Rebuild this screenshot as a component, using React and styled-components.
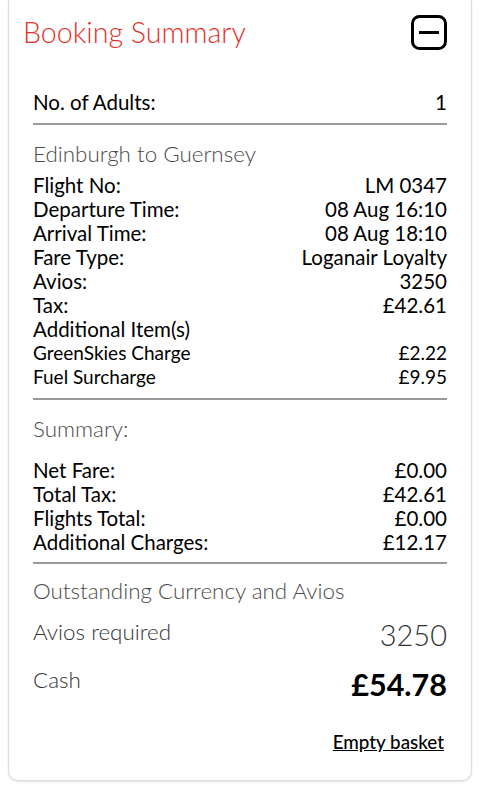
import React from 'react';
import styled, { createGlobalStyle } from 'styled-components';

const GlobalStyle = createGlobalStyle`
  body {
    margin: 0;
    background: #fff;
    font-family: Lato, "Open Sans", sans-serif;
    color: #111;
  }
`;

const flight = [
  { label: 'Flight No:', value: 'LM 0347' },
  { label: 'Departure Time:', value: '08 Aug 16:10' },
  { label: 'Arrival Time:', value: '08 Aug 18:10' },
  { label: 'Fare Type:', value: 'Loganair Loyalty' },
  { label: 'Avios:', value: '3250' },
  { label: 'Tax:', value: '£42.61' },
];

const extras = [
  { label: 'GreenSkies Charge', value: '£2.22' },
  { label: 'Fuel Surcharge', value: '£9.95' },
];

const summary = [
  { label: 'Net Fare:', value: '£0.00' },
  { label: 'Total Tax:', value: '£42.61' },
  { label: 'Flights Total:', value: '£0.00' },
  { label: 'Additional Charges:', value: '£12.17' },
];

const MinusBox = () => (
  <svg width="36" height="35" viewBox="0 0 36 35" fill="none">
    <rect x="1.5" y="1.5" width="33" height="32" rx="7" stroke="#000" strokeWidth="3" />
    <line x1="8" y1="17.5" x2="28" y2="17.5" stroke="#000" strokeWidth="3" />
  </svg>
);

const App = () => {
  return (
    <>
      <GlobalStyle />
      <Page>
        <Card>
          <Header>
            <Title>Booking Summary</Title>
            <Toggle aria-label="Collapse">
              <MinusBox />
            </Toggle>
          </Header>
          <Body>
            <Row>
              <span>No. of Adults:</span>
              <span>1</span>
            </Row>
            <Rule />
            <SectionTitle>Edinburgh to Guernsey</SectionTitle>
            {flight.map((r) => (
              <Row key={r.label}>
                <span>{r.label}</span>
                <span>{r.value}</span>
              </Row>
            ))}
            <Row>
              <span>Additional Item(s)</span>
            </Row>
            {extras.map((r) => (
              <Row key={r.label} small>
                <span>{r.label}</span>
                <span>{r.value}</span>
              </Row>
            ))}
            <Rule />
            <SectionTitle spaced>Summary:</SectionTitle>
            {summary.map((r) => (
              <Row key={r.label}>
                <span>{r.label}</span>
                <span>{r.value}</span>
              </Row>
            ))}
            <Rule thin />
            <SectionTitle>Outstanding Currency and Avios</SectionTitle>
            <TotalRow>
              <TotalLabel>Avios required</TotalLabel>
              <AviosValue>3250</AviosValue>
            </TotalRow>
            <TotalRow>
              <TotalLabel>Cash</TotalLabel>
              <CashValue>£54.78</CashValue>
            </TotalRow>
            <Footer>
              <EmptyLink href="#">Empty basket</EmptyLink>
            </Footer>
          </Body>
        </Card>
      </Page>
    </>
  );
};

const Page = styled.div`
  padding: 0 10px 7px 8px;
`;

const Card = styled.div`
  border: 1px solid #dcdcdc;
  border-top: none;
  border-radius: 0 0 10px 10px;
  box-shadow: 0 1px 2px rgba(0, 0, 0, 0.12);
  padding: 0 24px 0 24px;
  height: 781px;
  box-sizing: border-box;
`;

const Header = styled.div`
  display: flex;
  justify-content: space-between;
  align-items: center;
  padding: 14px 0 0 0;
`;

const Title = styled.h1`
  margin: 0 0 0 -10px;
  font-family: Lato, sans-serif;
  font-weight: 300;
  font-size: 28.6px;
  color: #e5302a;
  line-height: 34px;
`;

const Toggle = styled.button`
  border: none;
  background: none;
  padding: 0;
  display: flex;
  margin-top: 1px;
  cursor: pointer;
`;

const Body = styled.div`
  padding: 40px 0 0 0;
`;

const Row = styled.div`
  display: flex;
  justify-content: space-between;
  font-size: ${(p) => (p.small ? '19px' : '20.5px')};
  line-height: 24px;
  color: #000;
`;

const Rule = styled.hr`
  border: none;
  height: ${(p) => (p.thin ? '1.5px' : '2px')};
  background: #9a9a9a;
  margin: ${(p) => (p.thin ? '8px 0 14px' : '9px 0 16px')};
`;

const SectionTitle = styled.div`
  font-weight: 300;
  font-size: 22.4px;
  color: #4a4a4a;
  line-height: 26px;
  margin-bottom: ${(p) => (p.spaced ? '16px' : '6px')};
`;

const TotalRow = styled.div`
  display: flex;
  justify-content: space-between;
  align-items: flex-start;
  margin-top: 14px;
`;

const TotalLabel = styled.span`
  font-weight: 300;
  font-size: 22.4px;
  color: #333;
  line-height: 28px;
`;

const AviosValue = styled.span`
  font-weight: 300;
  font-size: 29px;
  color: #333;
  line-height: 34px;
`;

const CashValue = styled.span`
  font-weight: 700;
  font-size: 30.5px;
  color: #000;
  line-height: 36px;
`;

const Footer = styled.div`
  display: flex;
  justify-content: flex-end;
  margin-top: 28px;
`;

const EmptyLink = styled.a`
  font-size: 18.8px;
  font-weight: 500;
  color: #000;
  text-decoration: underline;
  margin-right: 3px;
`;

export default App;
